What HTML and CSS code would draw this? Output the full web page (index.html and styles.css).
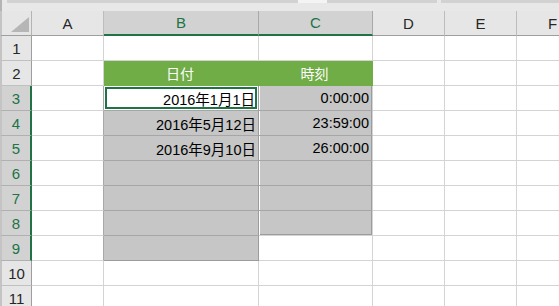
FILE: index.html
```html
<!DOCTYPE html>
<html lang="ja">
  <head>
    <meta charset="UTF-8" />
    <title>Sheet1</title>
    <link rel="stylesheet" href="styles.css">
  </head>

  <body>
    <div class="top">
      <span class="seg edge"></span>
      <span class="seg w1"></span>
      <span class="seg lite"></span>
      <span class="seg w2"></span>
      <span class="seg gap"></span>
      <span class="seg w3"></span>
    </div>

    <div class="sheet">
      <!-- 列見出し -->
      <div class="corner"><div class="tri"></div></div>
      <div class="ch">A</div>
      <div class="ch on">B</div>
      <div class="ch on">C</div>
      <div class="ch">D</div>
      <div class="ch">E</div>
      <div class="ch">F</div>

      <!-- 1 -->
      <div class="rh">1</div>
      <div class="c"></div>
      <div class="c"></div>
      <div class="c"></div>
      <div class="c"></div>
      <div class="c"></div>
      <div class="c"></div>

      <!-- 2 -->
      <div class="rh">2</div>
      <div class="c"></div>
      <div class="c hd">日付</div>
      <div class="c hd">時刻</div>
      <div class="c"></div>
      <div class="c"></div>
      <div class="c"></div>

      <!-- 3 -->
      <div class="rh on">3</div>
      <div class="c left"></div>
      <div class="c colb active">2016年1月1日</div>
      <div class="c sel colc">0:00:00</div>
      <div class="c"></div>
      <div class="c"></div>
      <div class="c"></div>

      <!-- 4 -->
      <div class="rh on">4</div>
      <div class="c left"></div>
      <div class="c sel colb">2016年5月12日</div>
      <div class="c sel colc">23:59:00</div>
      <div class="c"></div>
      <div class="c"></div>
      <div class="c"></div>

      <!-- 5 -->
      <div class="rh on">5</div>
      <div class="c left"></div>
      <div class="c sel colb">2016年9月10日</div>
      <div class="c sel colc">26:00:00</div>
      <div class="c"></div>
      <div class="c"></div>
      <div class="c"></div>

      <!-- 6 -->
      <div class="rh on">6</div>
      <div class="c left"></div>
      <div class="c sel colb"></div>
      <div class="c sel colc"></div>
      <div class="c"></div>
      <div class="c"></div>
      <div class="c"></div>

      <!-- 7 -->
      <div class="rh on">7</div>
      <div class="c left"></div>
      <div class="c sel colb"></div>
      <div class="c sel colc"></div>
      <div class="c"></div>
      <div class="c"></div>
      <div class="c"></div>

      <!-- 8 -->
      <div class="rh on">8</div>
      <div class="c left"></div>
      <div class="c sel colb"></div>
      <div class="c sel colc last"></div>
      <div class="c"></div>
      <div class="c"></div>
      <div class="c"></div>

      <!-- 9 -->
      <div class="rh on">9</div>
      <div class="c left"></div>
      <div class="c sel colb last"></div>
      <div class="c"></div>
      <div class="c"></div>
      <div class="c"></div>
      <div class="c"></div>

      <!-- 10 -->
      <div class="rh">10</div>
      <div class="c"></div>
      <div class="c"></div>
      <div class="c"></div>
      <div class="c"></div>
      <div class="c"></div>
      <div class="c"></div>

      <!-- 11 -->
      <div class="rh">11</div>
      <div class="c"></div>
      <div class="c"></div>
      <div class="c"></div>
      <div class="c"></div>
      <div class="c"></div>
      <div class="c"></div>
    </div>
  </body>
</html>
```

FILE: styles.css
```css
* {
  padding: 0;
  margin: 0;
  box-sizing: border-box;
}

body {
  width: 559px;
  height: 306px;
  overflow: hidden;
  background-color: #fff;
  font-family: "Liberation Sans", "Noto Sans CJK JP", sans-serif;
}

/* 上の帯 */
.top {
  display: flex;
  height: 11px;
  background-color: #e8e8e8;
}

.seg {
  height: 3px;
  background-color: #d2d2d2;
}

.seg.edge {
  width: 2px;
  height: 11px;
  background-color: #b4b4b4;
}

.seg.w1 {
  width: 291px;
  margin-left: 5px;
}

.seg.lite {
  width: 29px;
  background-color: #f4f4f4;
}

.seg.w2 {
  width: 110px;
}

.seg.gap {
  width: 4px;
  background-color: #e8e8e8;
}

.seg.w3 {
  flex: 1;
}

/* シート */
.sheet {
  display: grid;
  grid-template-columns: 32px 72px 155px 114px 72px 72px 72px;
  grid-auto-rows: 25px;
}

.corner {
  display: flex;
  justify-content: flex-end;
  align-items: flex-end;
  padding: 0 2px 3px 0;
  background-color: #e6e6e6;
  border-left: 2px solid #c4c4c4;
  border-right: 1px solid #b4b4b4;
  border-bottom: 1px solid #9e9e9e;
}

.tri {
  width: 0;
  height: 0;
  border-left: 18px solid transparent;
  border-bottom: 15px solid #b6b6b6;
}

.ch {
  display: flex;
  justify-content: center;
  align-items: center;
  background-color: #e6e6e6;
  border-right: 1px solid #bdbdbd;
  border-bottom: 1px solid #9e9e9e;
  color: #262626;
  font-size: 15px;
}

.ch.on {
  background-color: #d2d2d2;
  border-right-color: #a9a9a9;
  border-bottom: 2px solid #217346;
  color: #217346;
}

.rh {
  display: flex;
  justify-content: center;
  align-items: center;
  background-color: #e6e6e6;
  border-left: 2px solid #c4c4c4;
  border-right: 1px solid #9e9e9e;
  border-bottom: 1px solid #c0c0c0;
  color: #262626;
  font-size: 15px;
}

.rh.on {
  background-color: #d2d2d2;
  border-right: 2px solid #217346;
  border-bottom-color: #b0b0b0;
  color: #217346;
}

.c {
  display: flex;
  justify-content: flex-end;
  align-items: center;
  padding-right: 2px;
  border-right: 1px solid #d4d4d4;
  border-bottom: 1px solid #d4d4d4;
  color: #000;
  font-size: 14.5px;
  white-space: nowrap;
}

.c.left {
  border-right-color: #a8a8a8;
}

.c.hd {
  justify-content: center;
  background-color: #70ad47;
  border-color: #70ad47;
  color: #fff;
  font-size: 14px;
}

.c.sel {
  background-color: #c6c6c6;
  border-bottom-color: #a6a6a6;
  border-right-color: #a6a6a6;
}

.c.colb {
  border-right-color: #9c9c9c;
}

.c.colb.last {
  border-bottom-color: #9c9c9c;
}

.c.colc {
  padding-right: 3px;
  border-right-color: #d4d4d4;
  box-shadow: inset 1px 0 0 #fff, inset -1px 0 0 #9c9c9c;
}

.c.colc.last {
  box-shadow: inset 1px 0 0 #fff, inset -1px 0 0 #9c9c9c, inset 0 -1px 0 #9c9c9c;
  border-bottom-color: #d4d4d4;
}

.c.active {
  padding-right: 3px;
  background-color: #fff;
  border-bottom-color: #a6a6a6;
  box-shadow: inset 0 0 0 1px #fff, inset 0 0 0 3px #217346;
}
```
